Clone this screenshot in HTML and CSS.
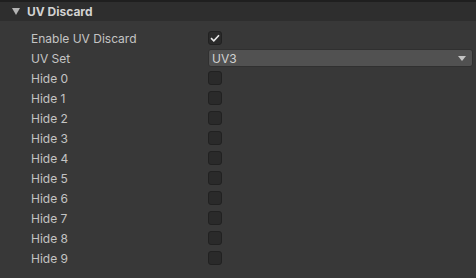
FILE: index.html
```html
<!DOCTYPE html>
<html lang="en">
<head>
    <meta charset="UTF-8">
    <title>UV Discard</title>
    <link rel="stylesheet" href="styles.css">
</head>
<body>
<div class="panel">
    <div class="header">
        <span class="fold"></span>
        <span class="title">UV Discard</span>
    </div>

    <div class="rows">
        <div class="row">
            <span class="label">Enable UV Discard</span>
            <span class="check on">
                <svg width="10" height="8" viewBox="0 0 10 8"><path d="M1 4.2 L3.8 6.8 L9 1.2" fill="none" stroke="#e6e6e6" stroke-width="1.6"/></svg>
            </span>
        </div>
        <div class="row">
            <span class="label">UV Set</span>
            <div class="dropdown">
                <span>UV3</span>
                <span class="arrow"></span>
            </div>
        </div>
        <div class="row"><span class="label">Hide 0</span><span class="check"></span></div>
        <div class="row"><span class="label">Hide 1</span><span class="check"></span></div>
        <div class="row"><span class="label">Hide 2</span><span class="check"></span></div>
        <div class="row"><span class="label">Hide 3</span><span class="check"></span></div>
        <div class="row"><span class="label">Hide 4</span><span class="check"></span></div>
        <div class="row"><span class="label">Hide 5</span><span class="check"></span></div>
        <div class="row"><span class="label">Hide 6</span><span class="check"></span></div>
        <div class="row"><span class="label">Hide 7</span><span class="check"></span></div>
        <div class="row"><span class="label">Hide 8</span><span class="check"></span></div>
        <div class="row"><span class="label">Hide 9</span><span class="check"></span></div>
    </div>
</div>
</body>
</html>
```

FILE: styles.css
```css
body {
    margin: 0;
    background-color: #383838;
    font-family: Inter, "Noto Sans", sans-serif;
    font-size: 12px;
    color: #c4c4c4;
}
.panel {
    width: 476px;
    height: 278px;
    overflow: hidden;
}
.header {
    height: 19px;
    border-top: 2px solid #1f1f1f;
    background-color: #2e2e2e;
    display: flex;
    align-items: center;
    padding-left: 12px;
}
.fold {
    width: 0;
    height: 0;
    border-left: 4px solid transparent;
    border-right: 4px solid transparent;
    border-top: 7px solid #b4b4b4;
    margin-right: 7px;
}
.title {
    font-weight: bold;
    font-size: 12px;
    color: #d2d2d2;
}
.rows {
    padding-top: 7px;
}
.row {
    height: 20px;
    display: grid;
    grid-template-columns: 177px 1fr;
    align-items: center;
    padding-left: 31px;
    padding-right: 3px;
}
.check {
    width: 12px;
    height: 12px;
    border: 1px solid #212121;
    border-radius: 3px;
    background-color: #2a2a2a;
    display: flex;
    align-items: center;
    justify-content: center;
}
.dropdown {
    height: 16px;
    border: 1px solid #303030;
    border-radius: 3px;
    background-color: #515151;
    display: flex;
    align-items: center;
    justify-content: space-between;
    padding: 0 6px 0 3px;
    color: #d2d2d2;
}
.arrow {
    width: 0;
    height: 0;
    border-left: 4px solid transparent;
    border-right: 4px solid transparent;
    border-top: 5px solid #c4c4c4;
}
```
